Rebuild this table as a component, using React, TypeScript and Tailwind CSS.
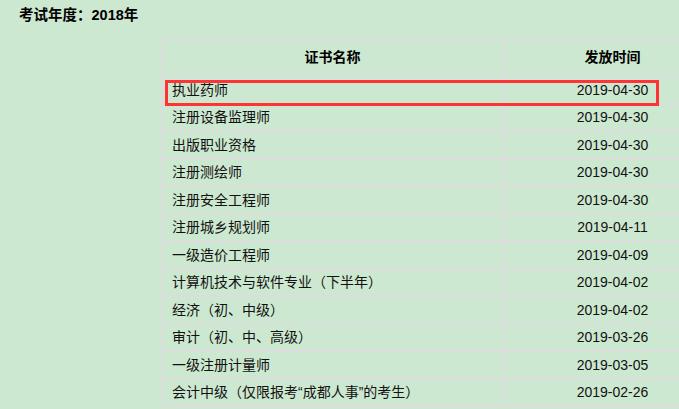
// 证书发放时间表
const rows = [
    { name: "执业药师", date: "2019-04-30" },
    { name: "注册设备监理师", date: "2019-04-30" },
    { name: "出版职业资格", date: "2019-04-30" },
    { name: "注册测绘师", date: "2019-04-30" },
    { name: "注册安全工程师", date: "2019-04-30" },
    { name: "注册城乡规划师", date: "2019-04-11" },
    { name: "一级造价工程师", date: "2019-04-09" },
    { name: "计算机技术与软件专业（下半年）", date: "2019-04-02" },
    { name: "经济（初、中级）", date: "2019-04-02" },
    { name: "审计（初、中、高级）", date: "2019-03-26" },
    { name: "一级注册计量师", date: "2019-03-05" },
    { name: "会计中级（仅限报考“成都人事”的考生）", date: "2019-02-26" },
];

export default function App() {
    return (
        <div
            className="h-[409px] w-[679px] overflow-hidden bg-[#cde8d0] text-[14px] text-[#111]"
            style={{ fontFamily: '"Liberation Sans", "Noto Sans CJK SC", sans-serif' }}
        >
            {/* 标题 */}
            <div className="pl-[19px] pt-[5px] text-[14.5px] font-bold leading-5 text-black">
                考试年度：2018年
            </div>

            {/* 表格 */}
            <div className="relative ml-[161px] mt-[13px] w-[560px] border-l-2 border-t-2 border-[#dcdcdc]">
                <div className="flex h-[37px] border-b-2 border-[#dcdcdc] font-bold text-black">
                    <div className="flex w-[341px] items-center justify-center border-r-2 border-[#dcdcdc]">
                        证书名称
                    </div>
                    <div className="flex flex-1 items-center justify-center">发放时间</div>
                </div>

                {rows.map((row) => (
                    <div
                        key={row.name}
                        className="flex h-[27.5px] border-b-2 border-[#dcdcdc] leading-none"
                    >
                        <div className="flex w-[341px] items-center border-r-2 border-[#dcdcdc] pl-[9px]">
                            {row.name}
                        </div>
                        <div className="flex flex-1 items-center justify-center">{row.date}</div>
                    </div>
                ))}

                {/* 红框标注第一行 */}
                <div className="pointer-events-none absolute left-[2px] top-[40px] h-[26px] w-[494px] border-[3px] border-[#f33]" />
            </div>
        </div>
    );
}
